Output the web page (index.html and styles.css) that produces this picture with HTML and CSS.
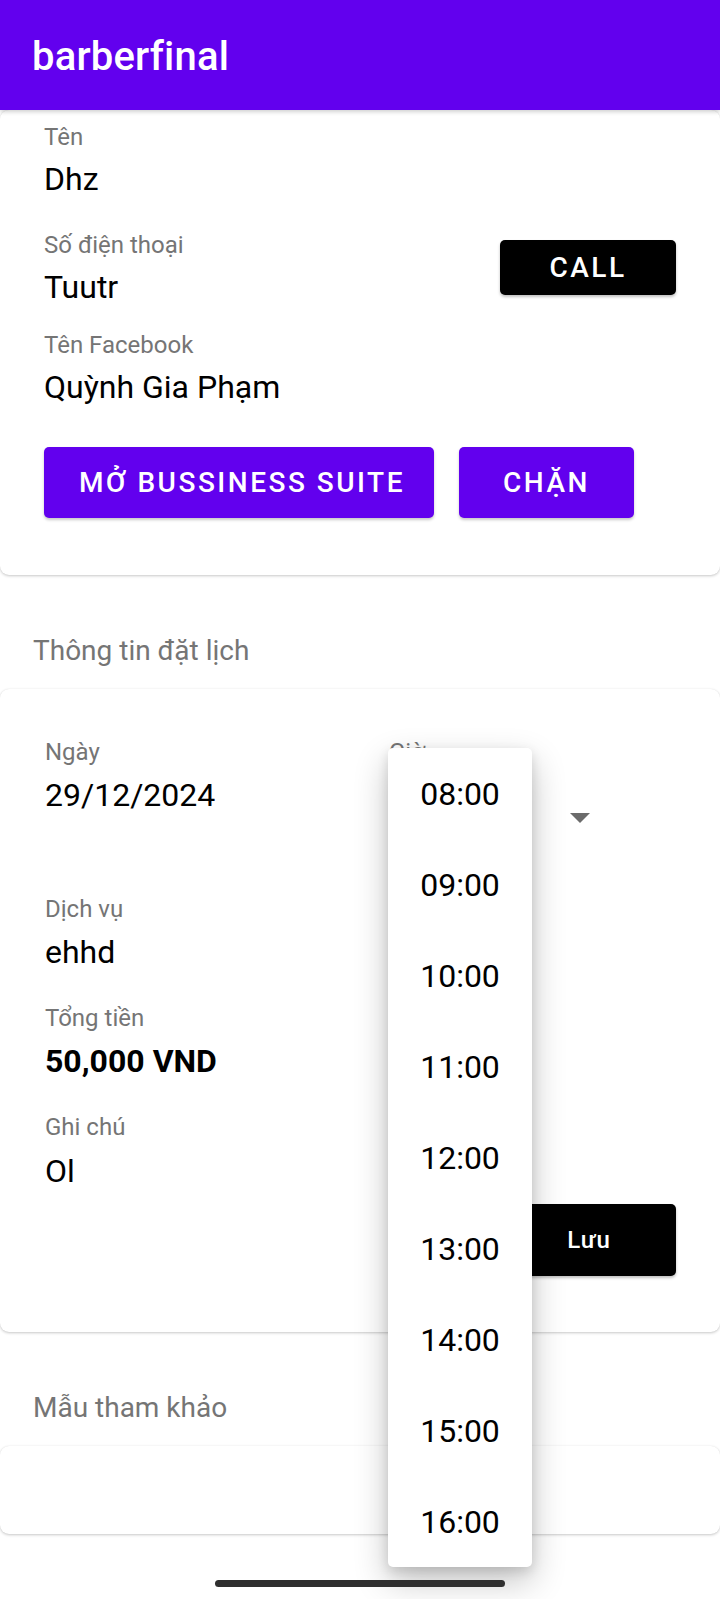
FILE: index.html
```html
<!DOCTYPE html>
<html lang="vi">
<head>
<meta charset="utf-8">
<meta name="viewport" content="width=720">
<title>barberfinal</title>
<link rel="stylesheet" href="styles.css">
</head>
<body>
<div class="screen">
  <header class="appbar">
    <h1 class="appbar-title">barberfinal</h1>
  </header>

  <main class="content">
    <section class="card card-customer">
      <div class="field">
        <div class="field-label">Tên</div>
        <div class="field-value">Dhz</div>
      </div>
      <div class="phone-row">
        <div class="field field-inline">
          <div class="field-label">Số điện thoại</div>
          <div class="field-value">Tuutr</div>
        </div>
        <button class="btn btn-black btn-call">CALL</button>
      </div>
      <div class="field field-end">
        <div class="field-label">Tên Facebook</div>
        <div class="field-value">Quỳnh Gia Phạm</div>
      </div>
      <div class="action-row">
        <button class="btn btn-purple btn-wide">MỞ BUSSINESS SUITE</button>
        <button class="btn btn-purple">CHẶN</button>
      </div>
    </section>

    <h2 class="section-title">Thông tin đặt lịch</h2>

    <section class="card card-booking">
      <div class="date-row">
        <div class="field field-inline">
          <div class="field-label">Ngày</div>
          <div class="field-value">29/12/2024</div>
        </div>
        <div class="time-col">
          <div class="field-label">Giờ</div>
          <div class="spinner">
            <span class="spinner-arrow"></span>
          </div>
        </div>
      </div>
      <div class="field">
        <div class="field-label">Dịch vụ</div>
        <div class="field-value">ehhd</div>
      </div>
      <div class="field">
        <div class="field-label">Tổng tiền</div>
        <div class="field-value field-value-bold">50,000 VND</div>
      </div>
      <div class="field field-end">
        <div class="field-label">Ghi chú</div>
        <div class="field-value">Ol</div>
      </div>
      <div class="save-row">
        <button class="btn btn-black btn-save">Lưu</button>
      </div>
    </section>

    <h2 class="section-title">Mẫu tham khảo</h2>

    <section class="card card-samples"></section>
  </main>

  <ul class="dropdown">
    <li class="dropdown-item">08:00</li>
    <li class="dropdown-item">09:00</li>
    <li class="dropdown-item">10:00</li>
    <li class="dropdown-item">11:00</li>
    <li class="dropdown-item">12:00</li>
    <li class="dropdown-item">13:00</li>
    <li class="dropdown-item">14:00</li>
    <li class="dropdown-item">15:00</li>
    <li class="dropdown-item">16:00</li>
  </ul>

  <div class="home-indicator"></div>
</div>
</body>
</html>
```

FILE: styles.css
```css
* {
  box-sizing: border-box;
}

html, body {
  margin: 0;
  padding: 0;
  background: #ffffff;
}

body {
  font-family: Roboto, "Noto Sans", "Liberation Sans", sans-serif;
  color: #000000;
}

.screen {
  position: relative;
  width: 720px;
  height: 1599px;
  overflow: hidden;
  background: #ffffff;
}

/* App bar */
.appbar {
  position: relative;
  z-index: 2;
  height: 110px;
  background: #6200ee;
  display: flex;
  align-items: center;
  padding: 2px 0 0 32px;
  box-shadow: 0 2px 4px rgba(0, 0, 0, 0.18);
}

.appbar-title {
  margin: 0;
  font-size: 40px;
  font-weight: 500;
  color: #ffffff;
  letter-spacing: 0.2px;
}

/* Cards */
.content {
  display: flex;
  flex-direction: column;
}

.card {
  background: #ffffff;
  border-radius: 9px;
  box-shadow: 0 1px 3px rgba(0, 0, 0, 0.22), 0 0 1px rgba(0, 0, 0, 0.06);
}

.card-customer {
  padding: 10.8px 44px 57px 44px;
}

.card-booking {
  padding: 46.8px 44px 56px 45px;
}

.card-samples {
  height: 88px;
}

.section-title {
  margin: 58px 0 20px 0;
  padding-left: 33px;
  font-size: 28px;
  line-height: 36px;
  font-weight: 400;
  color: #757575;
}

/* Fields */
.field {
  display: flex;
  flex-direction: column;
  margin-bottom: 30px;
}

.field-inline {
  margin-bottom: 0;
}

.field-end {
  margin-bottom: 0;
}

.field-label {
  font-size: 24px;
  line-height: 32px;
  color: #757575;
}

.field-value {
  margin-top: 6px;
  font-size: 32px;
  line-height: 40px;
  color: #000000;
}

.card-booking .field-value {
  margin-top: 7px;
}

.card-booking .field-end .field-value {
  margin-top: 8px;
}

.field-value-bold {
  font-weight: 700;
}

.phone-row {
  display: flex;
  align-items: center;
  justify-content: space-between;
  margin-bottom: 22px;
}

/* Buttons */
.btn {
  border: none;
  margin: 0;
  font-family: Roboto, "Noto Sans", "Liberation Sans", sans-serif;
  font-weight: 500;
  color: #ffffff;
  border-radius: 5px;
  cursor: pointer;
  display: flex;
  align-items: center;
  justify-content: center;
}

.btn-black {
  background: #000000;
  box-shadow: 0 2px 3px rgba(0, 0, 0, 0.25);
}

.btn-purple {
  background: #6200ee;
  height: 71px;
  width: 175px;
  padding: 0;
  font-size: 28px;
  letter-spacing: 2.5px;
  box-shadow: 0 2px 3px rgba(0, 0, 0, 0.22);
}

.btn-wide {
  width: auto;
  padding: 0 29px 0 35px;
}

.btn-call {
  width: 176px;
  height: 55px;
  font-size: 28px;
  letter-spacing: 2.5px;
}

.action-row {
  display: flex;
  gap: 25px;
  margin-top: 40px;
}

/* Booking */
.date-row {
  display: grid;
  grid-template-columns: 344px 1fr;
  margin-bottom: 25px;
}

.time-col {
  display: flex;
  flex-direction: column;
}

.spinner {
  width: 217px;
  height: 100px;
  display: flex;
  align-items: center;
  justify-content: flex-end;
  padding-right: 16px;
}

.spinner-arrow {
  width: 0;
  height: 0;
  border-left: 10px solid transparent;
  border-right: 10px solid transparent;
  border-top: 10px solid #6b6b6b;
}

.save-row {
  display: flex;
  justify-content: flex-end;
  margin-top: 13px;
}

.btn-save {
  width: 174px;
  height: 72px;
  font-size: 24px;
  letter-spacing: 1px;
}

/* Dropdown popup */
.dropdown {
  position: absolute;
  z-index: 5;
  left: 388px;
  top: 748px;
  width: 144px;
  height: 819px;
  margin: 0;
  padding: 1px 0 0 0;
  list-style: none;
  background: #ffffff;
  border-radius: 5px;
  box-shadow: 0 14px 34px rgba(0, 0, 0, 0.24), 0 4px 12px rgba(0, 0, 0, 0.12);
}

.dropdown-item {
  height: 91px;
  line-height: 91px;
  text-align: center;
  font-size: 32px;
  color: #000000;
}

/* System home indicator */
.home-indicator {
  position: absolute;
  z-index: 6;
  left: 215px;
  top: 1580px;
  width: 290px;
  height: 7px;
  border-radius: 4px;
  background: #2f2f2f;
}
```
